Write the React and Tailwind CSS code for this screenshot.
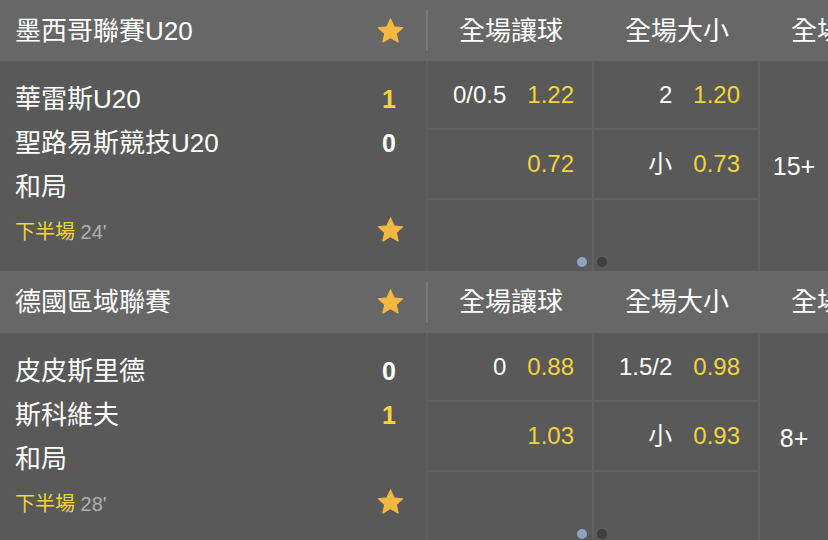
import React from "react";

const FONT = { fontFamily: '"Liberation Sans", "Noto Sans CJK TC", sans-serif' };

function Star({ className = "" }) {
  return (
    <svg viewBox="0 0 24 24" width="29" height="28" className={className}>
      <path
        d="M12 1.6l3.1 6.9 7.3.7-5.5 4.9 1.6 7.3L12 17.6l-6.5 3.8 1.6-7.3L1.6 9.2l7.3-.7z"
        fill="#f5b840"
        stroke="#f5b840"
        strokeWidth="1"
        strokeLinejoin="round"
      />
    </svg>
  );
}

function OddsCell({ line, odds, border = true }) {
  return (
    <div
      className={`flex items-center justify-end gap-[21px] pr-[18px] text-[24px] leading-none ${
        border ? "border-b-2 border-[#626262]" : ""
      }`}
    >
      {line ? <span className="text-white">{line}</span> : null}
      <span className="text-[#f3d43a]">{odds}</span>
    </div>
  );
}

function Match({ league, home, away, homeScore, awayScore, homeWin, awayWin, minute, hdp, ou, more, headerH }) {
  return (
    <div>
      {/* header */}
      <div className={`flex ${headerH} bg-[#676767] overflow-hidden`}>
        <div className="w-[426px] shrink-0 flex items-center justify-between pl-[15px] pr-[21px]">
          <span className="text-[26px] leading-none text-white">{league}</span>
          <Star />
        </div>
        <div className="w-[2px] shrink-0 flex items-center">
          <div className="w-[2px] h-[41px] bg-[#787878]" />
        </div>
        <div className="w-[166px] shrink-0 flex items-center justify-center text-[26px] leading-none text-white">全場讓球</div>
        <div className="w-[166px] shrink-0 flex items-center justify-center text-[26px] leading-none text-white">全場大小</div>
        <div className="w-[166px] shrink-0 flex items-center justify-center text-[26px] leading-none text-white whitespace-nowrap">全場角球</div>
      </div>
      {/* body */}
      <div className="flex h-[210px] bg-[#595959]">
        <div className="w-[428px] shrink-0 border-r-2 border-[#5f5f5f] pl-[15px] pt-[15px]">
          <div className="flex h-[44px] items-center justify-between pr-[30px] pt-[2px]">
            <span className="text-[26px] leading-none text-white">{home}</span>
            <span className={`text-[25px] font-bold leading-none ${homeWin ? "text-[#f3d43a]" : "text-white"}`}>{homeScore}</span>
          </div>
          <div className="flex h-[44px] items-center justify-between pr-[30px] pt-[2px]">
            <span className="text-[26px] leading-none text-white">{away}</span>
            <span className={`text-[25px] font-bold leading-none ${awayWin ? "text-[#f3d43a]" : "text-white"}`}>{awayScore}</span>
          </div>
          <div className="flex h-[44px] items-center pt-[1px]">
            <span className="text-[26px] leading-none text-white">和局</span>
          </div>
          <div className="flex h-[44px] items-center justify-between pr-[21px]">
            <span className="text-[20px] leading-none pt-[3px]">
              <span className="text-[#f3d43a]">下半場</span>
              <span className="text-[#b0b0b0]"> {minute}</span>
            </span>
            <Star />
          </div>
        </div>
        <div className="relative flex flex-1">
          <div className="w-[166px] shrink-0 border-r-2 border-[#626262] grid grid-rows-[69px_70px_1fr]">
            <OddsCell line={hdp[0]} odds={hdp[1]} />
            <OddsCell line={null} odds={hdp[2]} />
            <div />
          </div>
          <div className="w-[166px] shrink-0 border-r-2 border-[#626262] grid grid-rows-[69px_70px_1fr]">
            <OddsCell line={ou[0]} odds={ou[1]} />
            <OddsCell line="小" odds={ou[2]} />
            <div />
          </div>
          <div className="flex flex-1 items-center justify-center text-[25px] leading-none text-white">{more}</div>
          <div className="absolute left-[149px] bottom-[4px] flex gap-[10px]">
            <div className="h-[10px] w-[10px] rounded-full bg-[#8ba4c6]" />
            <div className="h-[10px] w-[10px] rounded-full bg-[#3e3e3e]" />
          </div>
        </div>
      </div>
    </div>
  );
}

export default function App() {
  return (
    <div className="w-[828px] h-[540px] overflow-hidden bg-[#595959]" style={FONT}>
      <Match
        headerH="h-[61px]"
        league="墨西哥聯賽U20"
        home="華雷斯U20"
        away="聖路易斯競技U20"
        homeScore="1"
        awayScore="0"
        homeWin
        minute="24'"
        hdp={["0/0.5", "1.22", "0.72"]}
        ou={["2", "1.20", "0.73"]}
        more="15+"
      />
      <Match
        headerH="h-[62px]"
        league="德國區域聯賽"
        home="皮皮斯里德"
        away="斯科維夫"
        homeScore="0"
        awayScore="1"
        awayWin
        minute="28'"
        hdp={["0", "0.88", "1.03"]}
        ou={["1.5/2", "0.98", "0.93"]}
        more="8+"
      />
    </div>
  );
}
